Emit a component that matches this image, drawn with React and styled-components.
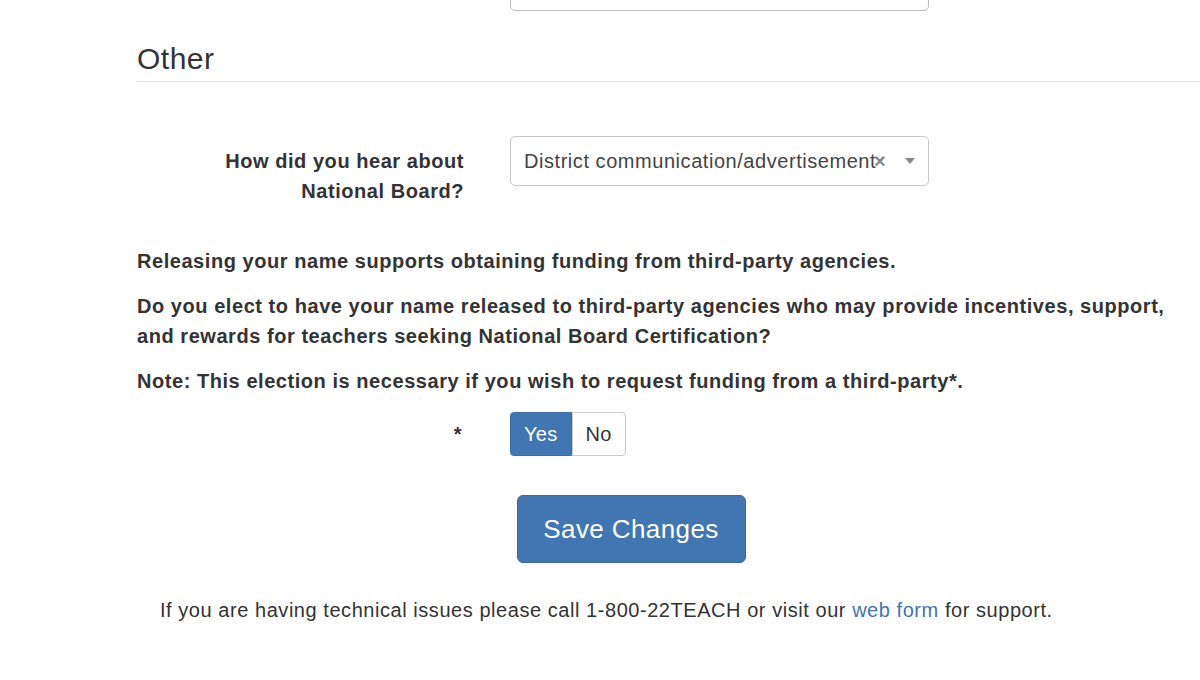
import React from 'react'
import styled, { createGlobalStyle } from 'styled-components'

const GlobalStyle = createGlobalStyle`
    html, body {
        margin: 0;
        padding: 0;
        background: #fff;
        font-family: "Liberation Sans", Arial, sans-serif;
        color: #333;
        overflow: hidden;
    }
`

const Page = styled.div`
    width: 1200px;
    height: 680px;
    overflow: hidden;
    position: relative;
`

const Container = styled.div`
    margin-left: 137px;
    width: 1063px;
    margin-top: -37px;
    font-size: 20px;
    letter-spacing: 0.55px;
`

const Row = styled.div`
    display: grid;
    grid-template-columns: 327px 419px;
    column-gap: 46px;
    align-items: start;
`

const Label = styled.label`
    font-weight: bold;
    text-align: right;
    line-height: 30px;
    padding-top: 10px;
    color: #333;
`

const TextInput = styled.div`
    height: 48px;
    border: 1px solid #bbb;
    border-radius: 5px;
    box-sizing: border-box;
`

const Legend = styled.h2`
    font-size: 30px;
    letter-spacing: 0.5px;
    font-weight: normal;
    margin: 30px 0 0;
    padding-bottom: 4px;
    color: #333;
    line-height: 36px;
    border-bottom: 1px solid #e2e2e2;
    margin-right: -10px;
`

const FormRow = styled(Row)`
    margin-top: 54px;
`

const Select = styled.div`
    position: relative;
    height: 50px;
    border: 1px solid #c8c8c8;
    border-radius: 5px;
    box-sizing: border-box;
    display: flex;
    align-items: center;
    padding-left: 13px;
    color: #444;
`

const SelectText = styled.span`
    white-space: nowrap;
    overflow: hidden;
    width: 362px;
`

const Clear = styled.span`
    position: absolute;
    left: 363px;
    top: 12px;
    font-size: 20px;
    font-weight: bold;
    color: #888;
    line-height: 24px;
`

const Caret = styled.span`
    position: absolute;
    right: 13px;
    top: 21px;
    width: 0;
    height: 0;
    border-left: 5px solid transparent;
    border-right: 5px solid transparent;
    border-top: 6px solid #888;
`

const Text = styled.p`
    font-weight: bold;
    line-height: 30px;
    margin: ${p => p.$top || 0}px 0 0;
    color: #333;
`

const ToggleRow = styled(Row)`
    margin-top: 16px;
    align-items: center;
`

const Star = styled.span`
    font-weight: bold;
    text-align: right;
    padding-right: 2px;
`

const Group = styled.div`
    display: flex;
`

const Toggle = styled.button`
    height: 44px;
    padding: 0 ${p => p.$pad}px;
    font-family: inherit;
    font-size: 20px;
    letter-spacing: 0.3px;
    border: 1px solid ${p => (p.$active ? '#3d6ea6' : '#ccc')};
    background: ${p => (p.$active ? '#4176b2' : '#fff')};
    color: ${p => (p.$active ? '#fff' : '#333')};
    border-radius: ${p => (p.$first ? '4px 0 0 4px' : '0 4px 4px 0')};
    cursor: pointer;
    box-sizing: border-box;
`

const Actions = styled.div`
    display: flex;
    justify-content: center;
    margin-top: 39px;
    width: 988px;
`

const SaveButton = styled.button`
    width: 229px;
    height: 68px;
    font-family: inherit;
    font-size: 26px;
    letter-spacing: 0.4px;
    color: #fff;
    background: #4176b2;
    border: 1px solid #3a6aa2;
    border-radius: 6px;
    cursor: pointer;
`

const Footer = styled.p`
    margin: 36px 0 0 23px;
    color: #333;

    a {
        color: #3f74b3;
        text-decoration: none;
    }
`

export default function App() {
    return (
        <Page>
            <GlobalStyle />
            <Container>
                <Row>
                    <Label />
                    <TextInput />
                </Row>
                <Legend>Other</Legend>

                <FormRow>
                    <Label>How did you hear about<br />National Board?</Label>
                    <Select>
                        <SelectText>District communication/advertisement</SelectText>
                        <Clear>×</Clear>
                        <Caret />
                    </Select>
                </FormRow>

                <Text $top={40}>Releasing your name supports obtaining funding from third-party agencies.</Text>
                <Text $top={15}>
                    Do you elect to have your name released to third-party agencies who may provide incentives, support, and rewards for teachers seeking National Board Certification?
                </Text>
                <Text $top={15}>Note: This election is necessary if you wish to request funding from a third-party*.</Text>

                <ToggleRow>
                    <Star>*</Star>
                    <Group>
                        <Toggle $active $first $pad={13}>Yes</Toggle>
                        <Toggle $pad={13}>No</Toggle>
                    </Group>
                </ToggleRow>

                <Actions>
                    <SaveButton>Save Changes</SaveButton>
                </Actions>

                <Footer>
                    If you are having technical issues please call 1-800-22TEACH or visit our <a href="#">web form</a> for support.
                </Footer>
            </Container>
        </Page>
    )
}
